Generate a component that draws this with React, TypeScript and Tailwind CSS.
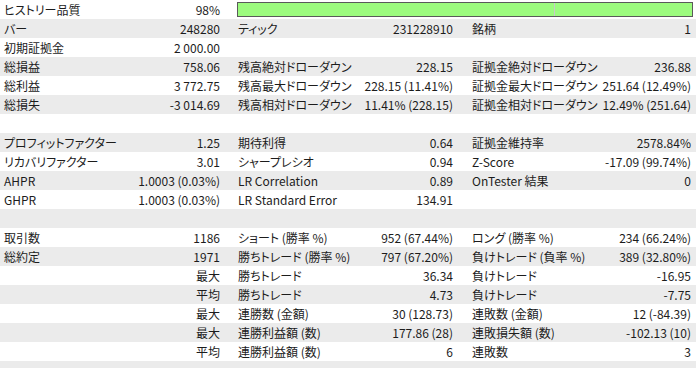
import React from "react";

type Row = [string, string, string, string, string, string];

const rows: Row[] = [
  ["バー", "248280", "ティック", "231228910", "銘柄", "1"],
  ["初期証拠金", "2 000.00", "", "", "", ""],
  ["総損益", "758.06", "残高絶対ドローダウン", "228.15", "証拠金絶対ドローダウン", "236.88"],
  ["総利益", "3 772.75", "残高最大ドローダウン", "228.15 (11.41%)", "証拠金最大ドローダウン", "251.64 (12.49%)"],
  ["総損失", "-3 014.69", "残高相対ドローダウン", "11.41% (228.15)", "証拠金相対ドローダウン", "12.49% (251.64)"],
  ["", "", "", "", "", ""],
  ["プロフィットファクター", "1.25", "期待利得", "0.64", "証拠金維持率", "2578.84%"],
  ["リカバリファクター", "3.01", "シャープレシオ", "0.94", "Z-Score", "-17.09 (99.74%)"],
  ["AHPR", "1.0003 (0.03%)", "LR Correlation", "0.89", "OnTester 結果", "0"],
  ["GHPR", "1.0003 (0.03%)", "LR Standard Error", "134.91", "", ""],
  ["", "", "", "", "", ""],
  ["取引数", "1186", "ショート (勝率 %)", "952 (67.44%)", "ロング (勝率 %)", "234 (66.24%)"],
  ["総約定", "1971", "勝ちトレード (勝率 %)", "797 (67.20%)", "負けトレード (負率 %)", "389 (32.80%)"],
  ["", "最大", "勝ちトレード", "36.34", "負けトレード", "-16.95"],
  ["", "平均", "勝ちトレード", "4.73", "負けトレード", "-7.75"],
  ["", "最大", "連勝数 (金額)", "30 (128.73)", "連敗数 (金額)", "12 (-84.39)"],
  ["", "最大", "連勝利益額 (数)", "177.86 (28)", "連敗損失額 (数)", "-102.13 (10)"],
  ["", "平均", "連勝利益額 (数)", "6", "連敗数", "3"],
  ["", "", "", "", "", ""],
];

const App = () => {
  return (
    <div
      className="w-[696px] h-[368px] overflow-hidden bg-white text-[12px] leading-[19px] text-[#1c1c1c] [font-feature-settings:'palt']"
      style={{ fontFamily: '"Noto Sans CJK JP", "Noto Sans", sans-serif' }}
    >
      {/* history quality */}
      <div className="flex h-[19px] items-start">
        <div className="flex w-[230px] justify-between pl-[4px] pr-[10px]">
          <span>ヒストリー品質</span>
          <span>98%</span>
        </div>
        <div className="ml-[7px] mt-[2px] flex h-[15px] w-[456px] border border-[#5a5a5a] bg-[#9cfb7e]">
          <div className="w-[316px]" />
          <div className="w-px bg-[#c8c8c8]" />
        </div>
      </div>

      {rows.map((r, i) => (
        <div
          key={i}
          className={`flex h-[19px] ${i % 2 === 0 ? "bg-[#ebebeb]" : "bg-white"}`}
        >
          <div className="flex w-[230px] justify-between pl-[4px] pr-[10px]">
            <span>{r[0]}</span>
            <span>{r[1]}</span>
          </div>
          <div className="flex w-[233px] justify-between pl-[8px] pr-[10px]">
            <span>{r[2]}</span>
            <span>{r[3]}</span>
          </div>
          <div className="flex flex-1 justify-between pl-[9px] pr-[5px]">
            <span>{r[4]}</span>
            <span>{r[5]}</span>
          </div>
        </div>
      ))}
    </div>
  );
};

export default App;
